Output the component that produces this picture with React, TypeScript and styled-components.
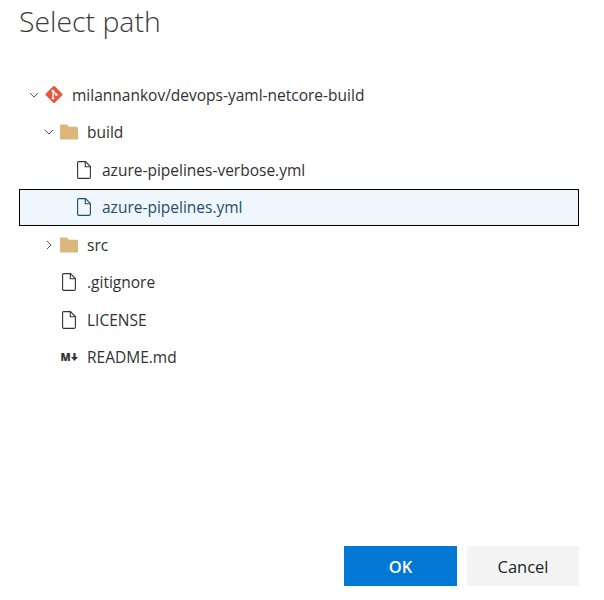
import React from "react";
import styled, { createGlobalStyle } from "styled-components";

const Global = createGlobalStyle`
  html, body { margin: 0; padding: 0; background: #fff; }
  body { font-family: "Open Sans", "Noto Sans", "Liberation Sans", sans-serif; }
`;

const Dialog = styled.div`
  display: flex;
  flex-direction: column;
  width: 604px;
  height: 600px;
  box-sizing: border-box;
  padding: 0 25px 14px 19px;
  color: #201f1e;
`;

const Title = styled.h1`
  margin: 0;
  height: 76px;
  padding: 3px 0 0 0;
  box-sizing: border-box;
  font-size: 28.4px;
  line-height: 37px;
  font-weight: 300;
  color: #3b3b3b;
`;

const Tree = styled.div`
  display: flex;
  flex-direction: column;
`;

const Row = styled.div<{ $depth: number; $selected?: boolean }>`
  display: flex;
  align-items: center;
  height: 37.5px;
  box-sizing: border-box;
  padding-left: ${(p) => 6 + p.$depth * 15}px;
  border: 1px solid ${(p) => (p.$selected ? "#000" : "transparent")};
  background: ${(p) => (p.$selected ? "#eff6fc" : "transparent")};
  color: ${(p) => (p.$selected ? "#1f4e6e" : "#323130")};
`;

const Chevron = styled.span`
  display: flex;
  align-items: center;
  justify-content: center;
  width: 16px;
  height: 16px;
  margin-right: 3px;
  flex: none;
`;

const IconBox = styled.span`
  display: flex;
  align-items: center;
  justify-content: center;
  width: 18px;
  height: 20px;
  margin-right: 9px;
  flex: none;
`;

const Label = styled.span`
  font-size: 15.5px;
  line-height: 20px;
  white-space: nowrap;
`;

const MdMark = styled.span`
  display: flex;
  align-items: center;
  font-size: 10.5px;
  line-height: 10px;
  font-weight: 800;
  color: #333;
`;

const Footer = styled.div`
  margin-top: auto;
  display: flex;
  justify-content: flex-end;
  gap: 10px;
`;

const Button = styled.button<{ $primary?: boolean }>`
  width: ${(p) => (p.$primary ? 113 : 112)}px;
  height: 40px;
  border: none;
  padding: 0;
  font-family: inherit;
  font-size: 16.5px;
  font-weight: ${(p) => (p.$primary ? 600 : 400)};
  background: ${(p) => (p.$primary ? "#0078d4" : "#f4f4f4")};
  color: ${(p) => (p.$primary ? "#fff" : "#201f1e")};
`;

const ChevronIcon = ({ open }: { open: boolean }) => (
  <svg width="10" height="10" viewBox="0 0 10 10" fill="none" stroke="#555" strokeWidth="1">
    {open ? <path d="M1 3l4 4 4-4" /> : <path d="M3 1l4 4-4 4" />}
  </svg>
);

const FolderIcon = () => (
  <svg width="19" height="16" viewBox="0 0 19 16">
    <path d="M0 1a1 1 0 0 1 1-1h6l2.5 2.5H18a1 1 0 0 1 1 1V15a1 1 0 0 1-1 1H1a1 1 0 0 1-1-1z" fill="#dcb67a" />
  </svg>
);

const FileIcon = ({ color = "#333" }: { color?: string }) => (
  <svg width="14" height="18" viewBox="0 0 14 18" fill="none" stroke={color} strokeWidth="1.1">
    <path d="M1.5.6H8.5L13.4 5.5V16a1.4 1.4 0 0 1-1.4 1.4H2A1.4 1.4 0 0 1 .6 16V1.5A.9.9 0 0 1 1.5.6z" />
    <path d="M8.3.8V5.7H13.2" />
  </svg>
);

const GitIcon = () => (
  <svg width="19" height="19" viewBox="0 0 19 19">
    <rect x="2.75" y="2.75" width="13.5" height="13.5" rx="1.6" transform="rotate(45 9.5 9.5)" fill="#e8563a" />
    <path d="M7.5 5l4.5 4.5M8.5 6v7.5" stroke="#fff" strokeWidth="1.3" fill="none" />
    <circle cx="8.5" cy="6" r="1.4" fill="#fff" />
    <circle cx="8.5" cy="13.5" r="1.4" fill="#fff" />
    <circle cx="12" cy="9.6" r="1.4" fill="#fff" />
  </svg>
);

const MdIcon = () => (
  <MdMark>
    M
    <svg width="7" height="8" viewBox="0 0 7 8">
      <path d="M2.4 0h2.2v4H7L3.5 8 0 4h2.4z" fill="#333" />
    </svg>
  </MdMark>
);

type Item = {
  depth: number;
  label: string;
  icon: React.ReactNode;
  chevron?: "open" | "closed";
  selected?: boolean;
};

const items: Item[] = [
  { depth: 0, label: "milannankov/devops-yaml-netcore-build", icon: <GitIcon />, chevron: "open" },
  { depth: 1, label: "build", icon: <FolderIcon />, chevron: "open" },
  { depth: 2, label: "azure-pipelines-verbose.yml", icon: <FileIcon /> },
  { depth: 2, label: "azure-pipelines.yml", icon: <FileIcon color="#1f4e6e" />, selected: true },
  { depth: 1, label: "src", icon: <FolderIcon />, chevron: "closed" },
  { depth: 1, label: ".gitignore", icon: <FileIcon /> },
  { depth: 1, label: "LICENSE", icon: <FileIcon /> },
  { depth: 1, label: "README.md", icon: <MdIcon /> },
];

export default function App() {
  return (
    <>
      <Global />
      <Dialog>
        <Title>Select path</Title>
        <Tree>
          {items.map((it) => (
            <Row key={it.label} $depth={it.depth} $selected={it.selected}>
              <Chevron>{it.chevron && <ChevronIcon open={it.chevron === "open"} />}</Chevron>
              <IconBox>{it.icon}</IconBox>
              <Label>{it.label}</Label>
            </Row>
          ))}
        </Tree>
        <Footer>
          <Button $primary>OK</Button>
          <Button>Cancel</Button>
        </Footer>
      </Dialog>
    </>
  );
}
